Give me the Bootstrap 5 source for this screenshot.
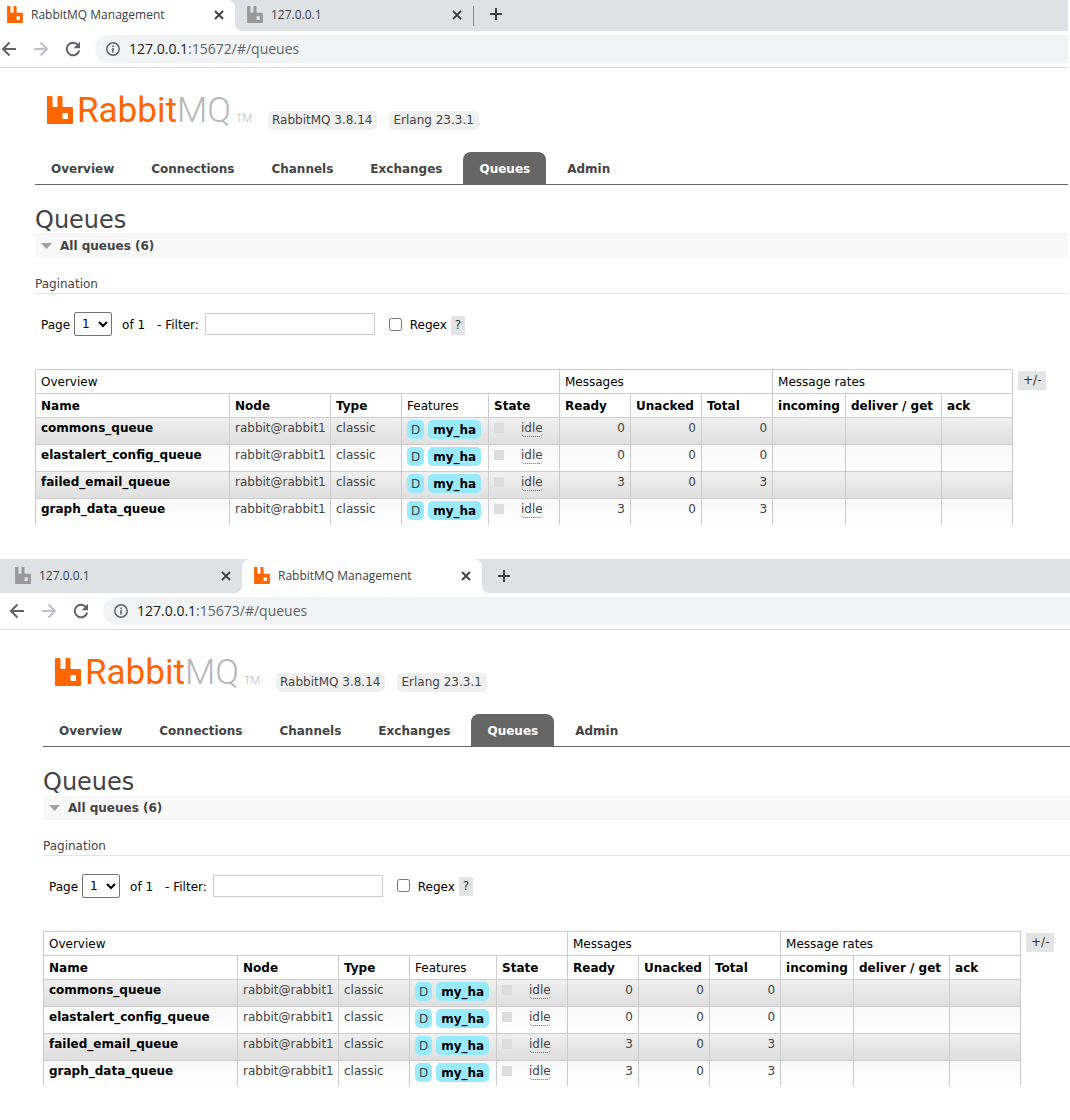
<!DOCTYPE html>
<html lang="en">
<head>
<meta charset="utf-8">
<meta name="viewport" content="width=device-width, initial-scale=1">
<title>RabbitMQ Management</title>
<link href="https://cdn.jsdelivr.net/npm/bootstrap@5.3.0/dist/css/bootstrap.min.css" rel="stylesheet">
<style>
body { font: 12px/16px "DejaVu Sans", Verdana, sans-serif; color: #444; background: #fff; }
a { color: inherit; text-decoration: none; }
.win-a { --edge: 35px; --nudge: 1px; margin-right: 2px; margin-bottom: 34px; }
.win-b { --edge: 43px; --nudge: 9px; }

/* browser chrome */
.tabstrip { background: #dee1e6; height: 34px; font: 12px/16px "Open Sans", "Noto Sans", sans-serif; color: #3c4043; }
.win-a .tabstrip { height: 31px; }
.win-a .btab { padding-bottom: 2px; }
.btab { width: 240px; padding: 0 11px 0 12px; }
.win-a .tabstrip > .btab { width: 235px; padding-left: 7px; }
.win-b .btab:first-child { width: 242px; padding-left: 15px; border-bottom-right-radius: 8px; background: #dee1e6; }
.btab.current { background: #fff; border-radius: 8px 8px 0 0; }
.win-a .btab.current { border-radius: 0 8px 0 0; }
.btab.divided { width: 239px; border-right: 1px solid #8e9196; height: 20px; }
.btab.current { position: relative; }
.btab.current::after, .win-b .btab.current::before { content: ""; position: absolute; bottom: 0; width: 8px; height: 8px; }
.btab.current::after { left: 100%; background: radial-gradient(circle at 100% 0, transparent 8px, #fff 8px); }
.win-b .btab.current::before { right: 100%; background: radial-gradient(circle at 0 0, transparent 8px, #fff 8px); }
.iconbtn { border: 0; padding: 0; background: none; display: flex; color: inherit; }
.iconbtn.dim { color: #bdc1c6; rotate: 180deg; }
.toolbar { height: 37px; border-bottom: 1px solid #dadce0; padding-left: var(--nudge); color: #5f6368; }
.omnibox { background: #f1f3f4; height: 28px; border-radius: 14px 0 0 14px; padding-left: 10px; margin-left: 14px; }
.addr { font: 14px/20px "Open Sans", "Noto Sans", sans-serif; color: #5f6368; }
.addr b { font-weight: 400; color: #202124; }

/* page */
.page { padding-left: var(--edge); }
.brand { font: 400 35px/36px Roboto, sans-serif; color: #f60; padding: 25px 0 1px 12px; }
.brand svg { margin-bottom: 5px; }
.brand .mq { color: #b7b7b7; font-weight: 300; }
.brand sub { font-size: 11px; line-height: 12px; color: #b7b7b7; bottom: 0; margin-left: 5px; }
.ver { background: #f0f0f0; border-radius: 5px; padding: 1px 5px 2px 4px; }
.ver + .ver { margin-left: 12px; }
.menu { border-bottom: 1px solid #666; gap: 5px; margin-top: 22px; }
.menu a { display: block; padding: 9px 16px 0; height: 32px; font-weight: 700; border-radius: 8px 8px 0 0; }
.menu a.on { background: #666; color: #fff; }
h1 { font-size: 24px; line-height: 26px; font-weight: 400; margin: 22px 0 0; }
.fold { background: #f8f8f8; font-size: 12px; line-height: 16px; font-weight: 700; padding: 5px 6px 4px; margin: 0; gap: 8px; }
h3 { font-size: 12px; line-height: 16px; font-weight: 400; border-bottom: 1px solid #e4e4e4; padding-bottom: 1px; margin: 18px 0 18px; }
.filters { color: #000; padding-left: 6px; height: 24px; }
.filters label, .filters span { padding-top: 2px; }
.filters select { height: 24px; width: 38px; font: inherit; border: 1px solid #767676; border-radius: 2px; background: #fff; color: #000; padding: 0 0 0 3px; margin: 0 10px 0 4px; }
.filters input[type=text] { width: 170px; height: 22px; border: 1px solid #ccc; padding: 2px; margin: 0 14px 0 6px; }
.filters input[type=checkbox] { width: 13px; height: 13px; margin: 0 8px 0 0; }
.greybtn { border: 0; background: #e4e4e4; color: #333; font: inherit; padding: 1px 5px 2px; }
.filters .greybtn { margin: 2px 0 0 4px; padding: 1px 4px 2px; }

.queues { border-collapse: collapse; table-layout: fixed; width: 978px; color: #444; }
.queues th, .queues td { border: 1px solid #ccc; padding: 4px 0 3px 5px; white-space: nowrap; }
.queues th { color: #000; }
.queues .plain th, .queues th.plain { font-weight: 400; }
.queues td { padding: 2px 5px 0; height: 27px; vertical-align: top; }
.queues td.num { text-align: right; }
.queues tbody tr:nth-child(odd) { background: linear-gradient(#f0f0f0, #dfdfdf); }
.queues tbody tr:nth-child(even) { background: linear-gradient(#f8f8f8, #fff); }
.queues tbody tr:last-child td { border-bottom: 0; height: 26px; }
.queues td a { color: #000; font-weight: 700; }
.tag { display: inline-block; background: #98ebff; border-radius: 5px; padding: 2px 4px 1px; }
.tag + .tag { margin-left: 4px; padding: 2px 5px 1px; }
.dot { width: 10px; height: 10px; background: #ddd; margin: 3px 17px 0 0; }
.queues abbr { text-decoration: none; border-bottom: 1px dotted #666; border-radius: 4px; line-height: 16px; cursor: help; }
.tablewrap { margin-top: 33px; gap: 5px; }
.tablewrap .greybtn { margin-top: 2px; }
</style>
</head>
<body>
<svg class="d-none" xmlns="http://www.w3.org/2000/svg">
  <symbol id="rabbit" viewBox="0 0 26 28"><path fill-rule="evenodd" d="M1 0h3.500q1 0 1 1v9q0 1 1 1h3q1 0 1-1V1q0-1 1-1H14.500q1 0 1 1v9q0 1 1 1H25q1 0 1 1v15q0 1-1 1H1q-1 0-1-1V1q0-1 1-1zM16.500 17q-1 0-1 1v4q0 1 1 1H20q1 0 1-1v-4q0-1-1-1z"/></symbol>
  <symbol id="close" viewBox="0 0 10 10"><path d="M1 1l8 8M9 1l-8 8" stroke="#3c4043" stroke-width="1.800" fill="none"/></symbol>
  <symbol id="plus" viewBox="0 0 12 12"><path d="M6 0v12M0 6h12" stroke="#3c4043" stroke-width="2" fill="none"/></symbol>
  <symbol id="arrow" viewBox="0 0 16 16"><path d="M15 8H2M8.500 1.500L2 8l6.500 6.500" stroke="currentColor" stroke-width="2" fill="none"/></symbol>
  <symbol id="reload" viewBox="0 0 16 16"><path d="M13.300 4.500A6.300 6.300 0 1 0 14.200 9.500" stroke="currentColor" stroke-width="2" fill="none"/><path d="M15 .8v6.400H8.600z" fill="currentColor"/></symbol>
  <symbol id="info" viewBox="0 0 14 14"><circle cx="7" cy="7" r="6.200" stroke="currentColor" stroke-width="1.500" fill="none"/><path d="M6.200 6h1.600v4.500H6.200zM6.200 3.400h1.600V5H6.200z" fill="currentColor"/></symbol>
  <symbol id="caret" viewBox="0 0 11 6"><path d="M0 0h11L5.500 6z" fill="#a0a0a0"/></symbol>
</svg>

<section class="win-a">
  <div class="tabstrip d-flex">
    <div class="btab current d-flex align-items-center">
      <svg width="16" height="17" fill="#f60"><use href="#rabbit"/></svg>
      <span class="ms-2 me-auto">RabbitMQ Management</span>
      <button class="iconbtn" aria-label="Close tab"><svg width="10" height="10"><use href="#close"/></svg></button>
    </div>
    <div class="flex-grow-1 d-flex align-items-center">
      <div class="btab divided d-flex align-items-center">
        <svg width="16" height="17" fill="#999"><use href="#rabbit"/></svg>
        <span class="ms-2 me-auto">127.0.0.1</span>
        <button class="iconbtn" aria-label="Close tab"><svg width="10" height="10"><use href="#close"/></svg></button>
      </div>
      <button class="iconbtn ms-3 pb-1" aria-label="New tab"><svg width="12" height="12"><use href="#plus"/></svg></button>
    </div>
  </div>
  <div class="toolbar d-flex align-items-center">
    <button class="iconbtn" aria-label="Back"><svg width="16" height="16"><use href="#arrow"/></svg></button>
    <button class="iconbtn dim ms-3" aria-label="Forward"><svg width="16" height="16"><use href="#arrow"/></svg></button>
    <button class="iconbtn ms-3" aria-label="Reload"><svg width="16" height="16"><use href="#reload"/></svg></button>
    <div class="omnibox flex-grow-1 d-flex align-items-center gap-2">
      <svg width="16" height="14"><use href="#info"/></svg>
      <span class="addr"><b>127.0.0.1</b>:15672/#/queues</span>
    </div>
  </div>
  <div class="page">
    <header class="d-flex align-items-end">
      <div class="brand d-flex align-items-end">
        <svg width="26" height="28" fill="#f60"><use href="#rabbit"/></svg>
        <span class="ms-1">Rabbit<span class="mq">MQ<sub>TM</sub></span></span>
      </div>
      <span class="ver ms-3">RabbitMQ 3.8.14</span>
      <span class="ver">Erlang 23.3.1</span>
    </header>
    <nav class="menu d-flex">
      <a href="#">Overview</a><a href="#">Connections</a><a href="#">Channels</a><a href="#">Exchanges</a><a href="#" class="on">Queues</a><a href="#">Admin</a>
    </nav>
    <h1>Queues</h1>
    <h2 class="fold d-flex align-items-center"><svg width="11" height="6"><use href="#caret"/></svg>All queues (6)</h2>
    <h3>Pagination</h3>
    <div class="filters d-flex align-items-center">
      <label for="pa">Page</label><select id="pa"><option>1</option></select>
      <span>of 1</span><label class="ms-2 ps-1" for="fa">- Filter:</label><input type="text" id="fa">
      <input type="checkbox" id="ra"><label for="ra">Regex</label><button class="greybtn">?</button>
    </div>
    <div class="tablewrap d-flex align-items-start">
      <table class="queues">
        <colgroup><col style="width:194px"><col style="width:101px"><col style="width:71px"><col style="width:87px"><col style="width:71px"><col style="width:71px"><col style="width:71px"><col style="width:71px"><col style="width:73px"><col style="width:96px"><col style="width:71px"></colgroup>
        <thead>
          <tr class="plain"><th colspan="5">Overview</th><th colspan="3">Messages</th><th colspan="3">Message rates</th></tr>
          <tr><th>Name</th><th>Node</th><th>Type</th><th class="plain">Features</th><th>State</th><th>Ready</th><th>Unacked</th><th>Total</th><th>incoming</th><th>deliver / get</th><th>ack</th></tr>
        </thead>
        <tbody>
          <tr><td><a href="#">commons_queue</a></td><td>rabbit@rabbit1</td><td>classic</td><td><span class="tag">D</span><a class="tag" href="#">my_ha</a></td><td><div class="d-flex"><span class="dot"></span><abbr>idle</abbr></div></td><td class="num">0</td><td class="num">0</td><td class="num">0</td><td></td><td></td><td></td></tr>
          <tr><td><a href="#">elastalert_config_queue</a></td><td>rabbit@rabbit1</td><td>classic</td><td><span class="tag">D</span><a class="tag" href="#">my_ha</a></td><td><div class="d-flex"><span class="dot"></span><abbr>idle</abbr></div></td><td class="num">0</td><td class="num">0</td><td class="num">0</td><td></td><td></td><td></td></tr>
          <tr><td><a href="#">failed_email_queue</a></td><td>rabbit@rabbit1</td><td>classic</td><td><span class="tag">D</span><a class="tag" href="#">my_ha</a></td><td><div class="d-flex"><span class="dot"></span><abbr>idle</abbr></div></td><td class="num">3</td><td class="num">0</td><td class="num">3</td><td></td><td></td><td></td></tr>
          <tr><td><a href="#">graph_data_queue</a></td><td>rabbit@rabbit1</td><td>classic</td><td><span class="tag">D</span><a class="tag" href="#">my_ha</a></td><td><div class="d-flex"><span class="dot"></span><abbr>idle</abbr></div></td><td class="num">3</td><td class="num">0</td><td class="num">3</td><td></td><td></td><td></td></tr>
        </tbody>
      </table>
      <button class="greybtn">+/-</button>
    </div>
  </div>
</section>

<section class="win-b">
  <div class="tabstrip d-flex">
    <div class="btab d-flex align-items-center">
      <svg width="16" height="17" fill="#999"><use href="#rabbit"/></svg>
      <span class="ms-2 me-auto">127.0.0.1</span>
      <button class="iconbtn" aria-label="Close tab"><svg width="10" height="10"><use href="#close"/></svg></button>
    </div>
    <div class="btab current d-flex align-items-center">
      <svg width="16" height="17" fill="#f60"><use href="#rabbit"/></svg>
      <span class="ms-2 me-auto">RabbitMQ Management</span>
      <button class="iconbtn" aria-label="Close tab"><svg width="10" height="10"><use href="#close"/></svg></button>
    </div>
    <button class="iconbtn ms-3 align-self-center" aria-label="New tab"><svg width="12" height="12"><use href="#plus"/></svg></button>
  </div>
  <div class="toolbar d-flex align-items-center">
    <button class="iconbtn" aria-label="Back"><svg width="16" height="16"><use href="#arrow"/></svg></button>
    <button class="iconbtn dim ms-3" aria-label="Forward"><svg width="16" height="16"><use href="#arrow"/></svg></button>
    <button class="iconbtn ms-3" aria-label="Reload"><svg width="16" height="16"><use href="#reload"/></svg></button>
    <div class="omnibox flex-grow-1 d-flex align-items-center gap-2">
      <svg width="16" height="14"><use href="#info"/></svg>
      <span class="addr"><b>127.0.0.1</b>:15673/#/queues</span>
    </div>
  </div>
  <div class="page">
    <header class="d-flex align-items-end">
      <div class="brand d-flex align-items-end">
        <svg width="26" height="28" fill="#f60"><use href="#rabbit"/></svg>
        <span class="ms-1">Rabbit<span class="mq">MQ<sub>TM</sub></span></span>
      </div>
      <span class="ver ms-3">RabbitMQ 3.8.14</span>
      <span class="ver">Erlang 23.3.1</span>
    </header>
    <nav class="menu d-flex">
      <a href="#">Overview</a><a href="#">Connections</a><a href="#">Channels</a><a href="#">Exchanges</a><a href="#" class="on">Queues</a><a href="#">Admin</a>
    </nav>
    <h1>Queues</h1>
    <h2 class="fold d-flex align-items-center"><svg width="11" height="6"><use href="#caret"/></svg>All queues (6)</h2>
    <h3>Pagination</h3>
    <div class="filters d-flex align-items-center">
      <label for="pb">Page</label><select id="pb"><option>1</option></select>
      <span>of 1</span><label class="ms-2 ps-1" for="fb">- Filter:</label><input type="text" id="fb">
      <input type="checkbox" id="rb"><label for="rb">Regex</label><button class="greybtn">?</button>
    </div>
    <div class="tablewrap d-flex align-items-start">
      <table class="queues">
        <colgroup><col style="width:194px"><col style="width:101px"><col style="width:71px"><col style="width:87px"><col style="width:71px"><col style="width:71px"><col style="width:71px"><col style="width:71px"><col style="width:73px"><col style="width:96px"><col style="width:71px"></colgroup>
        <thead>
          <tr class="plain"><th colspan="5">Overview</th><th colspan="3">Messages</th><th colspan="3">Message rates</th></tr>
          <tr><th>Name</th><th>Node</th><th>Type</th><th class="plain">Features</th><th>State</th><th>Ready</th><th>Unacked</th><th>Total</th><th>incoming</th><th>deliver / get</th><th>ack</th></tr>
        </thead>
        <tbody>
          <tr><td><a href="#">commons_queue</a></td><td>rabbit@rabbit1</td><td>classic</td><td><span class="tag">D</span><a class="tag" href="#">my_ha</a></td><td><div class="d-flex"><span class="dot"></span><abbr>idle</abbr></div></td><td class="num">0</td><td class="num">0</td><td class="num">0</td><td></td><td></td><td></td></tr>
          <tr><td><a href="#">elastalert_config_queue</a></td><td>rabbit@rabbit1</td><td>classic</td><td><span class="tag">D</span><a class="tag" href="#">my_ha</a></td><td><div class="d-flex"><span class="dot"></span><abbr>idle</abbr></div></td><td class="num">0</td><td class="num">0</td><td class="num">0</td><td></td><td></td><td></td></tr>
          <tr><td><a href="#">failed_email_queue</a></td><td>rabbit@rabbit1</td><td>classic</td><td><span class="tag">D</span><a class="tag" href="#">my_ha</a></td><td><div class="d-flex"><span class="dot"></span><abbr>idle</abbr></div></td><td class="num">3</td><td class="num">0</td><td class="num">3</td><td></td><td></td><td></td></tr>
          <tr><td><a href="#">graph_data_queue</a></td><td>rabbit@rabbit1</td><td>classic</td><td><span class="tag">D</span><a class="tag" href="#">my_ha</a></td><td><div class="d-flex"><span class="dot"></span><abbr>idle</abbr></div></td><td class="num">3</td><td class="num">0</td><td class="num">3</td><td></td><td></td><td></td></tr>
        </tbody>
      </table>
      <button class="greybtn">+/-</button>
    </div>
  </div>
</section>
<script src="https://cdn.jsdelivr.net/npm/bootstrap@5.3.0/dist/js/bootstrap.bundle.min.js"></script>
</body>
</html>
